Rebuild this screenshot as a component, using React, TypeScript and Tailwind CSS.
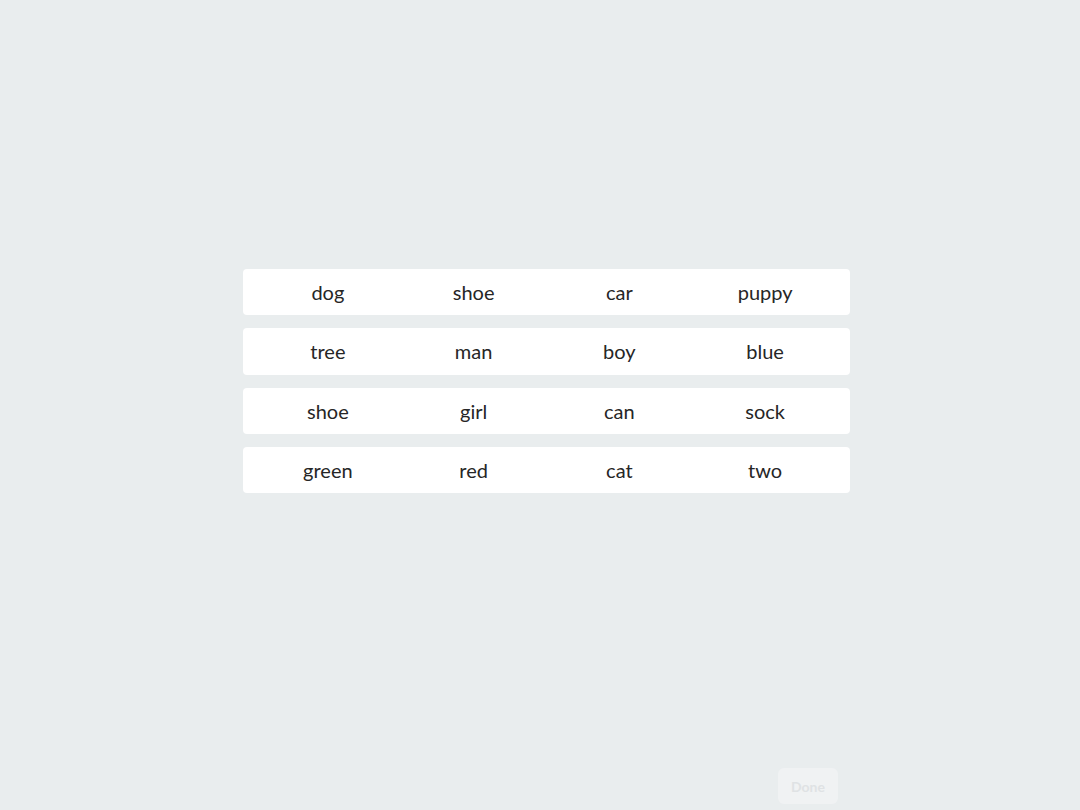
const rows = [
  ["dog", "shoe", "car", "puppy"],
  ["tree", "man", "boy", "blue"],
  ["shoe", "girl", "can", "sock"],
  ["green", "red", "cat", "two"],
];

export default function App() {
  return (
    <div className="flex h-[810px] w-[1080px] flex-col bg-[#e9edee] font-['Lato',sans-serif]">
      <div className="flex flex-1 items-center justify-center">
        <div className="ml-[13px] flex w-[607px] flex-col gap-[13px]">
          {rows.map((row, i) => (
            <div
              key={i}
              className="grid h-[46.4px] grid-cols-4 items-center rounded-[4px] bg-white px-[12px]"
            >
              {row.map((word, j) => (
                <div key={j} className="text-center text-[20px] leading-none text-[#262626]">
                  {word}
                </div>
              ))}
            </div>
          ))}
        </div>
      </div>
      <div className="flex h-[48px] items-start justify-end pr-[242px] pt-[6px]">
        <button className="h-[36px] w-[60px] rounded-[6px] bg-[#f0f2f3] text-[14px] font-bold text-[#dfe2e4]">
          Done
        </button>
      </div>
    </div>
  );
}
